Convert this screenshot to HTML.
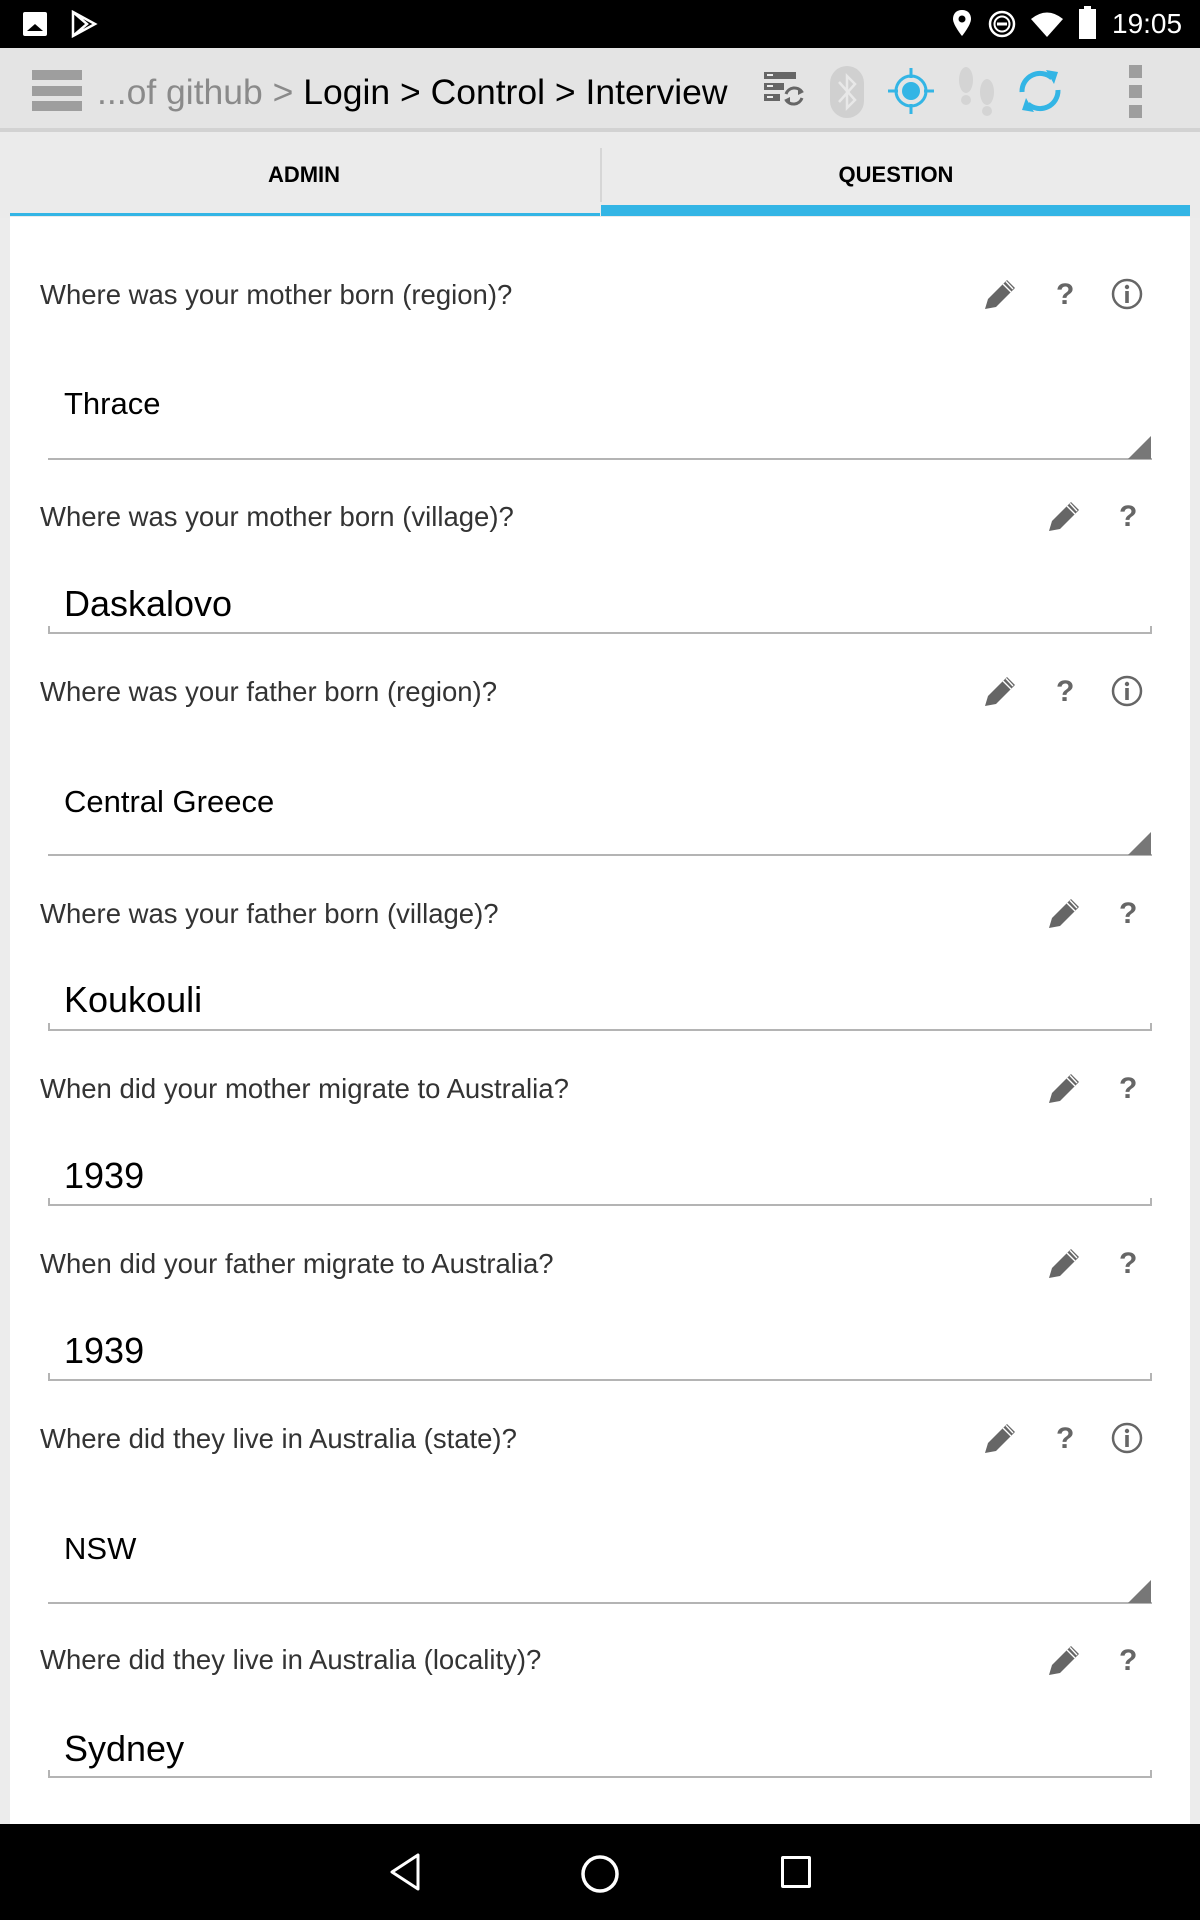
<!DOCTYPE html>
<html><head><meta charset="utf-8"><style>
*{margin:0;padding:0;box-sizing:border-box}
body{width:1200px;height:1920px;position:relative;background:#ececec;font-family:"Liberation Sans",sans-serif;overflow:hidden}
.a{position:absolute}
.lbl{position:absolute;left:40px;font-size:27.5px;color:#333;line-height:30px}
.val{position:absolute;left:64px;color:#000;line-height:40px}
.ul{position:absolute;left:48px;width:1104px;height:2px;background:#b4b4b4}
.tk{position:absolute;width:2px;height:8px;background:#b4b4b4}
.tri{position:absolute;left:1128px;width:0;height:0;border-left:23px solid transparent;border-bottom:23px solid #777}
.ic{position:absolute}
</style></head><body>
<!-- status bar -->
<div class="a" style="left:0;top:0;width:1200px;height:48px;background:#000"></div>
<div class="a" style="left:23px;top:12px;width:24px;height:24px;background:#fff;border-radius:2px"></div>
<div class="a" style="left:27px;top:24px;width:0;height:0;border-left:8px solid transparent;border-right:8px solid transparent;border-bottom:7px solid #000"></div>
<svg class="a" style="left:70px;top:10px" width="28" height="28" viewBox="0 0 28 28"><path d="M3 2 L25 14 L3 26 Z M3 2 L17 14 L3 26" fill="none" stroke="#fff" stroke-width="2.5"/></svg>
<svg class="a" style="left:950px;top:8px" width="24" height="32" viewBox="0 0 24 32"><path d="M12 2 C6 2 3 6 3 11 C3 17 12 28 12 28 C12 28 21 17 21 11 C21 6 18 2 12 2Z" fill="#fff"/><circle cx="12" cy="11" r="3.5" fill="#000"/></svg>
<svg class="a" style="left:988px;top:10px" width="28" height="28" viewBox="0 0 28 28"><circle cx="14" cy="14" r="12" fill="none" stroke="#fff" stroke-width="2.5"/><circle cx="14" cy="14" r="7.5" fill="none" stroke="#fff" stroke-width="2"/><rect x="9" y="12.5" width="10" height="3" fill="#fff"/></svg>
<svg class="a" style="left:1030px;top:10px" width="34" height="28" viewBox="0 0 34 28"><path d="M1 9 Q17 -4 33 9 L17 27 Z" fill="#fff"/></svg>
<div class="a" style="left:1079px;top:9px;width:17px;height:30px;background:#fff"></div>
<div class="a" style="left:1084px;top:6px;width:7px;height:4px;background:#fff"></div>
<div class="a" style="left:1112px;top:8px;font-size:28px;color:#fff;line-height:32px">19:05</div>
<!-- action bar -->
<div class="a" style="left:0;top:48px;width:1200px;height:80px;background:#e4e4e4"></div>
<div class="a" style="left:0;top:128px;width:1200px;height:4px;background:#d2d2d2"></div>
<div class="a" style="left:32px;top:70px;width:50px;height:10px;background:#9e9e9e"></div>
<div class="a" style="left:32px;top:86px;width:50px;height:10px;background:#9e9e9e"></div>
<div class="a" style="left:32px;top:101px;width:50px;height:10px;background:#9e9e9e"></div>
<div class="a" style="left:97px;top:70px;font-size:35.5px;line-height:44px;white-space:nowrap;color:#000"><span style="color:#8a8a8a">...of github &gt;</span> Login &gt; Control &gt; Interview</div>
<svg class="a" style="left:762px;top:70px" width="44" height="44" viewBox="0 0 44 44"><rect x="2" y="2" width="32" height="7" fill="#666"/><rect x="2" y="13" width="20" height="7" fill="#666"/><rect x="2" y="24" width="16" height="7" fill="#666"/><rect x="5" y="4" width="6" height="2" fill="#eee"/><rect x="5" y="15" width="6" height="2" fill="#eee"/><rect x="5" y="26" width="6" height="2" fill="#eee"/><path d="M24 24 A9 9 0 0 1 40 22 M40 28 A9 9 0 0 1 24 30" fill="none" stroke="#666" stroke-width="3"/><path d="M36 18 L42 22 L36 25Z M28 33 L22 30 L28 27Z" fill="#666"/></svg>
<svg class="a" style="left:828px;top:64px" width="38" height="56" viewBox="0 0 38 56"><rect x="2" y="2" width="34" height="52" rx="17" fill="#d0d0d0"/><path d="M11 18 L27 36 L19 44 L19 12 L27 20 L11 38" fill="none" stroke="#e8e8e8" stroke-width="2.5"/></svg>
<svg class="a" style="left:886px;top:66px" width="50" height="50" viewBox="0 0 50 50"><circle cx="25" cy="25" r="15" fill="none" stroke="#33b5e5" stroke-width="3"/><circle cx="25" cy="25" r="9" fill="#33b5e5"/><path d="M25 2 V12 M25 38 V48 M2 25 H12 M38 25 H48" stroke="#33b5e5" stroke-width="3"/></svg>
<svg class="a" style="left:954px;top:64px" width="46" height="54" viewBox="0 0 46 54"><ellipse cx="12" cy="16" rx="7" ry="13" fill="#d4d4d4"/><ellipse cx="12" cy="36" rx="5" ry="5" fill="#d4d4d4"/><ellipse cx="33" cy="28" rx="7" ry="13" fill="#d4d4d4"/><ellipse cx="33" cy="47" rx="5" ry="5" fill="#d4d4d4"/></svg>
<svg class="a" style="left:1016px;top:66px" width="48" height="50" viewBox="0 0 48 50"><path d="M6 26 A18 18 0 0 1 36 12 M42 24 A18 18 0 0 1 12 38" fill="none" stroke="#33b5e5" stroke-width="5"/><path d="M30 4 L42 6 L38 18Z M18 46 L6 44 L10 32Z" fill="#33b5e5"/></svg>
<div class="a" style="left:1129px;top:65px;width:13px;height:13px;background:#9e9e9e"></div>
<div class="a" style="left:1129px;top:85px;width:13px;height:13px;background:#9e9e9e"></div>
<div class="a" style="left:1129px;top:105px;width:13px;height:13px;background:#9e9e9e"></div>
<!-- tabs -->
<div class="a" style="left:0;top:132px;width:1200px;height:86px;background:#ebebeb"></div>
<div class="a" style="left:600px;top:148px;width:2px;height:54px;background:#d6d6d6"></div>
<div class="a" style="left:0;top:160px;width:608px;text-align:center;font-size:22px;font-weight:bold;line-height:30px">ADMIN</div>
<div class="a" style="left:602px;top:160px;width:588px;text-align:center;font-size:22px;font-weight:bold;line-height:30px">QUESTION</div>
<div class="a" style="left:10px;top:213px;width:590px;height:3px;background:#33b5e5"></div>
<div class="a" style="left:601px;top:205px;width:589px;height:11px;background:#33b5e5"></div>
<!-- content -->
<div class="a" style="left:10px;top:217px;width:1180px;height:1607px;background:#fff"></div>

<div class="lbl" style="top:280px">Where was your mother born (region)?</div>
<div class="val" style="top:384px;font-size:31px">Thrace</div>
<div class="ul" style="top:458px"></div><div class="tri" style="top:436px"></div>

<div class="lbl" style="top:502px">Where was your mother born (village)?</div>
<div class="val" style="top:584px;font-size:36px">Daskalovo</div>
<div class="ul" style="top:632px"></div><div class="tk" style="left:48px;top:626px"></div><div class="tk" style="left:1150px;top:626px"></div>

<div class="lbl" style="top:677px">Where was your father born (region)?</div>
<div class="val" style="top:782px;font-size:31px">Central Greece</div>
<div class="ul" style="top:854px"></div><div class="tri" style="top:832px"></div>

<div class="lbl" style="top:899px">Where was your father born (village)?</div>
<div class="val" style="top:980px;font-size:36px">Koukouli</div>
<div class="ul" style="top:1029px"></div><div class="tk" style="left:48px;top:1023px"></div><div class="tk" style="left:1150px;top:1023px"></div>

<div class="lbl" style="top:1074px">When did your mother migrate to Australia?</div>
<div class="val" style="top:1156px;font-size:36px">1939</div>
<div class="ul" style="top:1204px"></div><div class="tk" style="left:48px;top:1198px"></div><div class="tk" style="left:1150px;top:1198px"></div>

<div class="lbl" style="top:1249px">When did your father migrate to Australia?</div>
<div class="val" style="top:1331px;font-size:36px">1939</div>
<div class="ul" style="top:1379px"></div><div class="tk" style="left:48px;top:1373px"></div><div class="tk" style="left:1150px;top:1373px"></div>

<div class="lbl" style="top:1424px">Where did they live in Australia (state)?</div>
<div class="val" style="top:1529px;font-size:31px">NSW</div>
<div class="ul" style="top:1602px"></div><div class="tri" style="top:1580px"></div>

<div class="lbl" style="top:1645px">Where did they live in Australia (locality)?</div>
<div class="val" style="top:1729px;font-size:36px">Sydney</div>
<div class="ul" style="top:1776px"></div><div class="tk" style="left:48px;top:1770px"></div><div class="tk" style="left:1150px;top:1770px"></div>

<svg width="0" height="0" style="position:absolute"><defs>
<g id="pen"><path d="M1 31 L4 21 L23 2 L31 10 L12 29 Z" fill="#666"/><path d="M19 6 L27 14 M22 3.5 L29 11" stroke="#fff" stroke-width="1.4"/></g>
<g id="q"><text x="8" y="26" font-family="Liberation Sans" font-weight="bold" font-size="30" fill="#666">?</text></g>
<g id="inf"><circle cx="16" cy="16" r="14" fill="none" stroke="#666" stroke-width="2.5"/><circle cx="16" cy="9" r="2.2" fill="#666"/><rect x="14.2" y="13" width="3.6" height="12" fill="#666"/></g>
</defs></svg>
<svg class="ic" style="left:984px;top:278px" width="32" height="32"><use href="#pen"/></svg>
<svg class="ic" style="left:1048px;top:278px" width="32" height="32"><use href="#q"/></svg>
<svg class="ic" style="left:1111px;top:278px" width="32" height="32"><use href="#inf"/></svg>

<svg class="ic" style="left:1048px;top:500px" width="32" height="32"><use href="#pen"/></svg>
<svg class="ic" style="left:1111px;top:500px" width="32" height="32"><use href="#q"/></svg>

<svg class="ic" style="left:984px;top:675px" width="32" height="32"><use href="#pen"/></svg>
<svg class="ic" style="left:1048px;top:675px" width="32" height="32"><use href="#q"/></svg>
<svg class="ic" style="left:1111px;top:675px" width="32" height="32"><use href="#inf"/></svg>

<svg class="ic" style="left:1048px;top:897px" width="32" height="32"><use href="#pen"/></svg>
<svg class="ic" style="left:1111px;top:897px" width="32" height="32"><use href="#q"/></svg>

<svg class="ic" style="left:1048px;top:1072px" width="32" height="32"><use href="#pen"/></svg>
<svg class="ic" style="left:1111px;top:1072px" width="32" height="32"><use href="#q"/></svg>

<svg class="ic" style="left:1048px;top:1247px" width="32" height="32"><use href="#pen"/></svg>
<svg class="ic" style="left:1111px;top:1247px" width="32" height="32"><use href="#q"/></svg>

<svg class="ic" style="left:984px;top:1422px" width="32" height="32"><use href="#pen"/></svg>
<svg class="ic" style="left:1048px;top:1422px" width="32" height="32"><use href="#q"/></svg>
<svg class="ic" style="left:1111px;top:1422px" width="32" height="32"><use href="#inf"/></svg>

<svg class="ic" style="left:1048px;top:1644px" width="32" height="32"><use href="#pen"/></svg>
<svg class="ic" style="left:1111px;top:1644px" width="32" height="32"><use href="#q"/></svg>

<div class="a" style="left:0;top:1824px;width:1200px;height:96px;background:#000"></div>
<svg class="a" style="left:386px;top:1852px" width="36" height="40" viewBox="0 0 36 40"><path d="M32 3 L32 37 L6 20 Z" fill="none" stroke="#fff" stroke-width="3" stroke-linejoin="round"/></svg>
<svg class="a" style="left:578px;top:1852px" width="44" height="44" viewBox="0 0 44 44"><circle cx="22" cy="22" r="17" fill="none" stroke="#fff" stroke-width="3.5"/></svg>
<div class="a" style="left:781px;top:1856px;width:30px;height:32px;border:3px solid #fff;border-radius:2px"></div>
</body></html>
